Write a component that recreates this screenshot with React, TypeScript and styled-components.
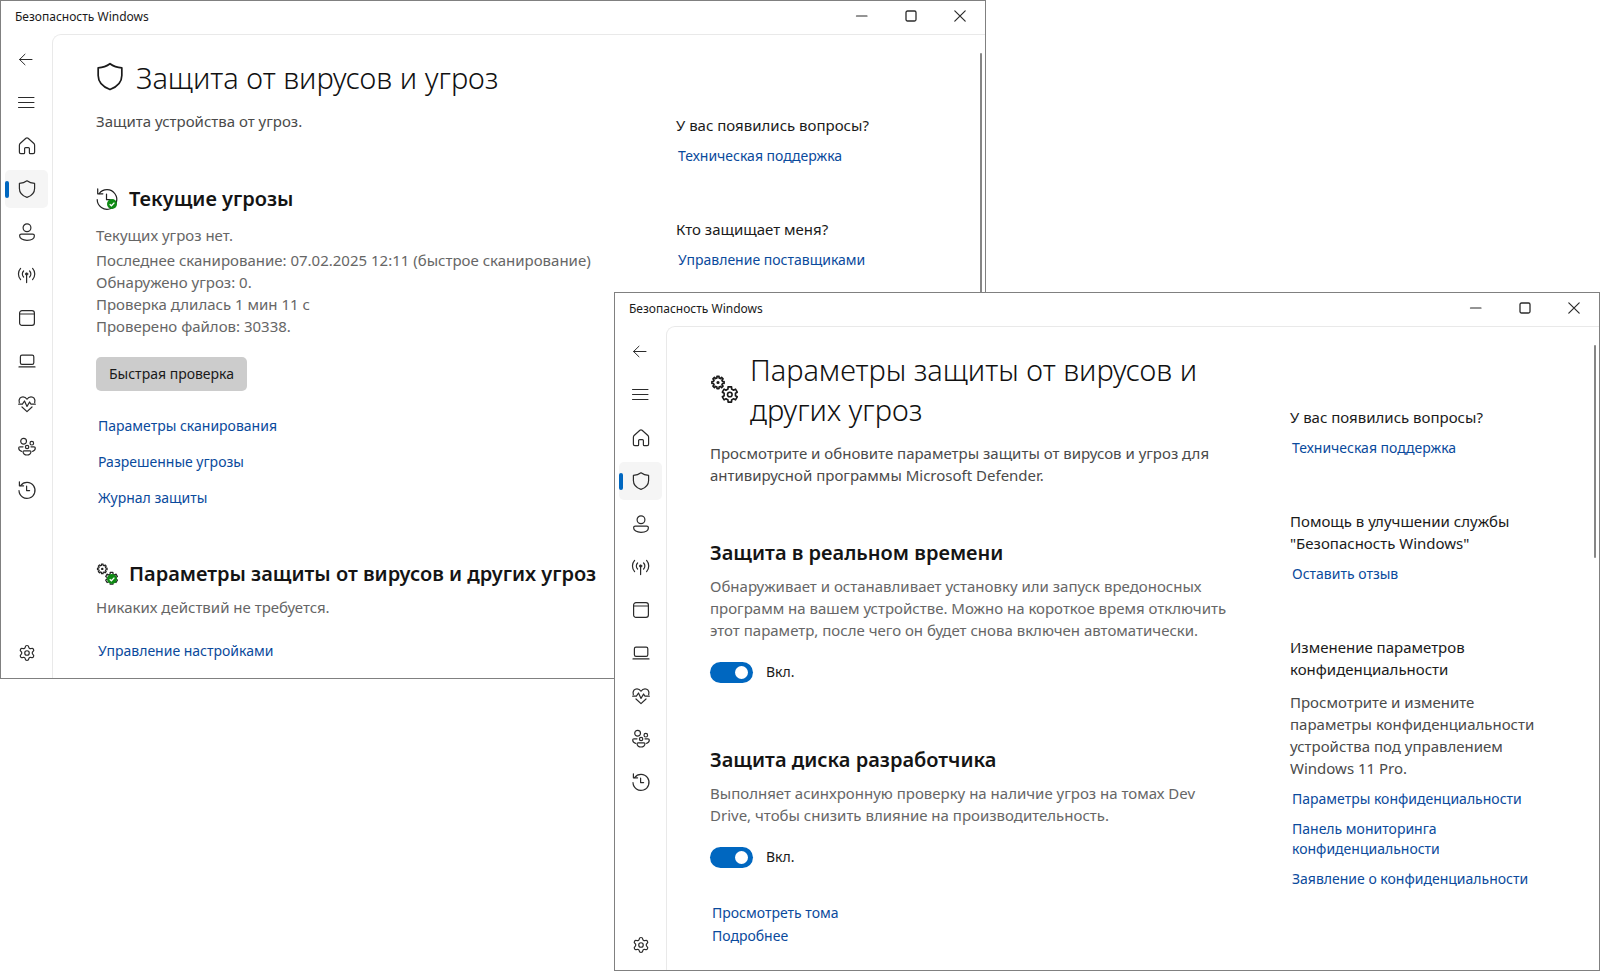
import React from "react";
import styled, { createGlobalStyle, css } from "styled-components";
import { Settings } from "lucide-react";

const GlobalStyle = createGlobalStyle`
  * { box-sizing: border-box; }
  body {
    margin: 0;
    background: #ffffff;
    color: #1a1a1a;
    font-family: "Noto Sans", "Open Sans", sans-serif;
    font-size: 15px;
    line-height: 22px;
  }
  h1, h2, h3, p, ul { margin: 0; padding: 0; }
  ul { list-style: none; }
`;

/* ---------- desktop and windows ---------- */

const Desktop = styled.div`
  display: grid;
  grid-template-columns: 614fr 372fr 614fr;
  grid-template-rows: 292px auto 292px;
  min-height: 100vh;
`;

const Frame = styled.section<{ $front?: boolean }>`
  position: relative;
  display: flex;
  flex-direction: column;
  min-width: 0;
  background: #ffffff;
  border: 1px solid #808080;
  grid-column: ${(p) => (p.$front ? "2 / 4" : "1 / 3")};
  grid-row: ${(p) => (p.$front ? "2 / 4" : "1 / 3")};
  z-index: ${(p) => (p.$front ? 2 : 1)};
`;

const TitleBar = styled.header`
  display: flex;
  justify-content: space-between;
  height: 33px;
  padding: 0 1px 0 14px;
  font-size: 12px;
  line-height: 32px;
`;

const Controls = styled.div`
  display: flex;
`;

const plainButton = css`
  display: flex;
  align-items: center;
  justify-content: center;
  padding: 0;
  border: 0;
  background: none;
  color: #2b2b2b;
  font: inherit;
`;

const ControlButton = styled.button`
  ${plainButton}
  width: 49px;
  height: 30px;
`;

const Body = styled.div`
  display: flex;
  flex: 1;
`;

const Nav = styled.nav`
  display: flex;
  flex-direction: column;
  gap: 5px;
  width: 51px;
  padding: 7px 4px 6px;
`;

const NavButton = styled.button<{ $active?: boolean; $last?: boolean }>`
  ${plainButton}
  position: relative;
  height: 38px;
  border-radius: 5px;
  background: ${(p) => (p.$active ? "#f5f5f5" : "none")};
  margin-top: ${(p) => (p.$last ? "auto" : "0")};

  &::before {
    content: "";
    display: ${(p) => (p.$active ? "block" : "none")};
    position: absolute;
    left: 0;
    top: 11px;
    width: 4px;
    height: 17px;
    border-radius: 2px;
    background: #0067c0;
  }
`;

const Panel = styled.div`
  display: flex;
  flex: 1;
  min-width: 0;
  gap: 40px;
  padding: 23px 40px 10px 43px;
  border: solid #e9e9e9;
  border-width: 1px 0 0 1px;
  border-top-left-radius: 9px;
`;

const Main = styled.main`
  flex: 1;
  min-width: 0;
`;

const Side = styled.aside`
  flex: none;
  width: 269px;
  padding-top: 56px;
`;

const ScrollThumb = styled.div<{ $long?: boolean }>`
  position: absolute;
  top: 52px;
  right: 3px;
  width: 2px;
  height: ${(p) => (p.$long ? "260px" : "213px")};
  border-radius: 1px;
  background: #868686;
`;

/* ---------- text ---------- */

const PageTitle = styled.div`
  display: flex;
  align-items: center;
  gap: 12px;
  margin-bottom: 12px;
`;

const PageIcon = styled.span`
  display: flex;
  width: 28px;
  padding-bottom: 3px;
`;

const H1 = styled.h1`
  font-size: 29px;
  line-height: 40px;
  font-weight: 300;
  color: #111111;
`;

const Lead = styled.p`
  color: #4a4a4a;
`;

const Section = styled.section`
  margin-top: 51px;

  & + & {
    margin-top: 50px;
  }
`;

const ToggleSection = styled.section`
  margin-top: 51px;

  & + & {
    margin-top: 61px;
  }
`;

const SectionTitle = styled.div`
  display: flex;
  align-items: center;
  gap: 11px;
  margin-bottom: 6px;
`;

const H2 = styled.h2`
  font-size: 20px;
  line-height: 32px;
  font-weight: 600;
  color: #141414;
  white-space: nowrap;
`;

const Text = styled.p`
  color: #666666;
`;

const ScanReport = styled.div`
  display: flex;
  flex-direction: column;
  gap: 3px;
  padding-top: 3px;
`;

const Link = styled.a`
  display: inline-block;
  padding-left: 2px;
  color: #0a4a9c;
  font-size: 14px;
  line-height: 20px;
  text-decoration: none;
`;

const LinkList = styled.ul<{ $top: number; $gap: number }>`
  display: flex;
  flex-direction: column;
  gap: ${(p) => p.$gap}px;
  margin-top: ${(p) => p.$top}px;

  li {
    display: flex;
  }
`;

const ScanButton = styled.button`
  display: block;
  height: 34px;
  margin-top: 20px;
  padding: 0 13px;
  border: 0;
  border-radius: 5px;
  background: #cccccc;
  color: #1a1a1a;
  font: inherit;
  font-size: 14px;
`;

const ToggleRow = styled.label`
  display: flex;
  align-items: center;
  gap: 13px;
  width: max-content;
  margin-top: 20px;
  font-size: 14px;
`;

const Switch = styled.input`
  appearance: none;
  display: flex;
  align-items: center;
  width: 43px;
  height: 21px;
  margin: 0;
  padding: 0 5px;
  border-radius: 11px;
  background: #8a8a8a;

  &::before {
    content: "";
    width: 13px;
    height: 13px;
    border-radius: 50%;
    background: #ffffff;
  }

  &:checked {
    justify-content: flex-end;
    background: #0067c0;
  }
`;

const SideBlock = styled.section`
  & + & {
    margin-top: 52px;
  }
`;

const H3 = styled.h3`
  font-size: 15px;
  line-height: 22px;
  font-weight: 400;
`;

const SideText = styled(Lead)`
  margin-top: 11px;
`;

/* ---------- icons ---------- */

const Stroke = styled.svg.attrs({ fill: "none", stroke: "currentColor", strokeLinecap: "round", strokeLinejoin: "round" })`
  display: block;
  flex: none;
  overflow: visible;
`;

const shieldPath =
  "M9 .8C11.2 2.5 13.7 3.3 16.6 3.4V8.4C16.6 12.7 13.6 15.7 9 17.4C4.4 15.7 1.4 12.7 1.4 8.4V3.4C4.3 3.3 6.8 2.5 9 .8Z";

function NavIcon({ children }: { children: React.ReactNode }) {
  return (
    <Stroke width="18" height="18" viewBox="0 0 18 18" strokeWidth="1.2" aria-hidden="true">
      {children}
    </Stroke>
  );
}

const clockShape = (
  <>
    <path d="M2.6 4.6A8 8 0 1 1 1 9.6" />
    <path d="M1.4 .8V4.8H5.6" />
    <path d="M8.6 5V9.6H11.6" />
  </>
);

const navItems: { label: string; active?: boolean; icon: React.ReactNode }[] = [
  { label: "Назад", icon: <path d="M14 8.5H1.6M7 3.2L1.6 8.5L7 13.8" strokeWidth="1" /> },
  { label: "Меню", icon: <path d="M.5 3.5H16M.5 8.5H16M.5 13.5H16" strokeWidth="1" /> },
  {
    label: "Домой",
    icon: (
      <path d="M1.4 8.2Q1.4 7.2 2.1 6.5L7.9 1.3Q9 .4 10.1 1.3L15.9 6.5Q16.6 7.2 16.6 8.2V15.2Q16.6 16.6 15.2 16.6H12.3Q11.4 16.6 11.4 15.7V11.6Q11.4 10.6 10.4 10.6H7.6Q6.6 10.6 6.6 11.6V15.7Q6.6 16.6 5.7 16.6H2.8Q1.4 16.6 1.4 15.2Z" />
    ),
  },
  { label: "Защита от вирусов и угроз", active: true, icon: <path d={shieldPath} /> },
  {
    label: "Защита учетных записей",
    icon: (
      <>
        <circle cx="9" cy="4.8" r="3.9" />
        <path d="M3.3 11.2H14.7Q16.4 11.2 16.4 12.8C16.4 15.6 13.2 17.3 9 17.3S1.6 15.6 1.6 12.8Q1.6 11.2 3.3 11.2Z" />
      </>
    ),
  },
  {
    label: "Брандмауэр и безопасность сети",
    icon: (
      <>
        <circle cx="8.6" cy="8" r="1.3" fill="currentColor" strokeWidth=".6" />
        <path d="M8.6 9V16.6M5.6 11A4.2 4.2 0 0 1 5.6 5M11.6 5A4.2 4.2 0 0 1 11.6 11" />
        <path d="M2.6 13.6A8.4 8.4 0 0 1 2.6 2.4M14.6 2.4A8.4 8.4 0 0 1 14.6 13.6" />
      </>
    ),
  },
  {
    label: "Управление приложениями и браузером",
    icon: (
      <>
        <rect x="1.6" y="1.6" width="14.8" height="14.8" rx="2.4" />
        <path d="M1.8 5H16.2" />
      </>
    ),
  },
  {
    label: "Безопасность устройства",
    icon: (
      <>
        <rect x="2.4" y="3.2" width="13.4" height="9.2" rx="1.6" />
        <path d="M1 14.9H17" />
      </>
    ),
  },
  {
    label: "Производительность и работоспособность",
    icon: (
      <>
        <path d="M1.3 7.6C.3 3.6 2.8 1.8 5 1.8C6.8 1.8 8 2.6 9 4.2C10 2.6 11.2 1.8 13 1.8C15.2 1.8 17.7 3.6 16.7 7.6" />
        <path d="M.7 9.2H4.4L6.5 6L9 11.4L11.6 7L13 9.2H17.3" />
        <path d="M4 12L9 16.6L14 12" />
      </>
    ),
  },
  {
    label: "Параметры для семьи",
    icon: (
      <>
        <circle cx="5.6" cy="3.3" r="2.9" />
        <circle cx="13.8" cy="5.2" r="1.8" />
        <circle cx="9.1" cy="9" r="1.7" />
        <path d="M5 8.8H2Q.7 8.8 .7 10Q.8 12.6 3.6 13.4M13 8.8H16Q17.3 8.8 17.3 10Q17.2 12.6 14.6 13.4" />
        <path d="M6 12.8H12Q13 12.8 13 13.8Q12.4 17 9 17T5 13.8Q5 12.8 6 12.8Z" />
      </>
    ),
  },
  { label: "Журнал защиты", icon: clockShape },
];

function gearPath(cx: number, cy: number, r: number, teeth: number) {
  const points: string[] = [];
  const step = (Math.PI * 2) / teeth;
  for (let i = 0; i < teeth; i++) {
    const a = i * step - Math.PI / 2;
    const spots: [number, number][] = [
      [-0.22, 1],
      [0.22, 1],
      [0.3, 0.74],
      [0.7, 0.74],
    ];
    spots.forEach(([offset, k]) => {
      const t = a + offset * step;
      points.push(`${(cx + Math.cos(t) * r * k).toFixed(2)} ${(cy + Math.sin(t) * r * k).toFixed(2)}`);
    });
  }
  return `M${points.join("L")}Z`;
}

function GearsIcon({ size, weight }: { size: number; weight: number }) {
  return (
    <Stroke width={size} height={size} viewBox="0 0 28 28" strokeWidth={weight} aria-hidden="true">
      <path d={gearPath(8, 7.5, 6.2, 8)} />
      <circle cx="8" cy="7.5" r=".8" fill="currentColor" />
      <path d={gearPath(19.8, 19.5, 7.8, 6)} />
      <circle cx="19.8" cy="19.5" r="2.3" />
    </Stroke>
  );
}

const BadgedIcon = styled.span`
  position: relative;
  display: flex;
  width: 22px;
  height: 22px;
  color: #222222;
`;

const Badge = styled.svg`
  position: absolute;
  right: 1px;
  bottom: 1px;
`;

function OkBadge() {
  return (
    <Badge width="10" height="10" viewBox="0 0 10 10" aria-hidden="true">
      <circle cx="5" cy="5" r="5" fill="#0f8a14" />
      <path d="M2.7 5.2L4.4 6.8L7.4 3.6" fill="none" stroke="#ffffff" strokeWidth="1.3" />
    </Badge>
  );
}

/* ---------- shared window shell ---------- */

interface WindowProps {
  front?: boolean;
  side: React.ReactNode;
  children: React.ReactNode;
}

function SecurityWindow({ front, side, children }: WindowProps) {
  return (
    <Frame $front={front}>
      <TitleBar>
        <span>Безопасность Windows</span>
        <Controls>
          <ControlButton aria-label="Свернуть">
            <Stroke width="12" height="12" viewBox="0 0 12 12" strokeWidth="1.2">
              <path d="M.5 6H11" />
            </Stroke>
          </ControlButton>
          <ControlButton aria-label="Развернуть">
            <Stroke width="12" height="12" viewBox="0 0 12 12" strokeWidth="1.3">
              <rect x="1" y="1" width="10" height="10" rx="1.5" />
            </Stroke>
          </ControlButton>
          <ControlButton aria-label="Закрыть">
            <Stroke width="12" height="12" viewBox="0 0 12 12" strokeWidth="1.2">
              <path d="M.8 .8L11.2 11.2M11.2 .8L.8 11.2" />
            </Stroke>
          </ControlButton>
        </Controls>
      </TitleBar>
      <Body>
        <Nav>
          {navItems.map((item) => (
            <NavButton key={item.label} $active={item.active} aria-label={item.label}>
              <NavIcon>{item.icon}</NavIcon>
            </NavButton>
          ))}
          <NavButton $last aria-label="Параметры">
            <Settings size={18} strokeWidth={1.6} />
          </NavButton>
        </Nav>
        <Panel>
          <Main>{children}</Main>
          <Side>{side}</Side>
        </Panel>
      </Body>
      <ScrollThumb $long={!front} />
    </Frame>
  );
}

function Links({ items, top = 10, gap = 10 }: { items: React.ReactNode[]; top?: number; gap?: number }) {
  return (
    <LinkList $top={top} $gap={gap}>
      {items.map((item, i) => (
        <li key={i}>
          <Link href="#">{item}</Link>
        </li>
      ))}
    </LinkList>
  );
}

function Toggle() {
  const [on, setOn] = React.useState(true);
  return (
    <ToggleRow>
      <Switch type="checkbox" role="switch" checked={on} onChange={() => setOn(!on)} />
      {on ? "Вкл." : "Откл."}
    </ToggleRow>
  );
}

const questions = (
  <SideBlock>
    <H3>У вас появились вопросы?</H3>
    <Links items={["Техническая поддержка"]} />
  </SideBlock>
);

export default function App() {
  return (
    <>
      <GlobalStyle />
      <Desktop>
        <SecurityWindow
          side={
            <>
              {questions}
              <SideBlock>
                <H3>Кто защищает меня?</H3>
                <Links items={["Управление поставщиками"]} />
              </SideBlock>
            </>
          }
        >
          <PageTitle>
            <PageIcon>
              <Stroke width="28" height="29" viewBox="0 0 18 18" strokeWidth="1.1" aria-hidden="true">
                <path d={shieldPath} />
              </Stroke>
            </PageIcon>
            <H1>Защита от вирусов и угроз</H1>
          </PageTitle>
          <Lead>Защита устройства от угроз.</Lead>

          <Section>
            <SectionTitle>
              <BadgedIcon>
                <Stroke width="22" height="22" viewBox="0 0 18 18" strokeWidth="1">
                  {clockShape}
                </Stroke>
                <OkBadge />
              </BadgedIcon>
              <H2>Текущие угрозы</H2>
            </SectionTitle>
            <ScanReport>
              <Text>Текущих угроз нет.</Text>
              <Text>
                Последнее сканирование: 07.02.2025 12:11 (быстрое сканирование)
                <br />
                Обнаружено угроз: 0.
                <br />
                Проверка длилась 1 мин 11 с
                <br />
                Проверено файлов: 30338.
              </Text>
            </ScanReport>
            <ScanButton>Быстрая проверка</ScanButton>
            <Links top={25} gap={16} items={["Параметры сканирования", "Разрешенные угрозы", "Журнал защиты"]} />
          </Section>

          <Section>
            <SectionTitle>
              <BadgedIcon>
                <GearsIcon size={22} weight={1.5} />
                <OkBadge />
              </BadgedIcon>
              <H2>Параметры защиты от вирусов и других угроз</H2>
            </SectionTitle>
            <Text>Никаких действий не требуется.</Text>
            <Links top={23} items={["Управление настройками"]} />
          </Section>
        </SecurityWindow>

        <SecurityWindow
          front
          side={
            <>
              {questions}
              <SideBlock>
                <H3>
                  Помощь в улучшении службы
                  <br />
                  "Безопасность Windows"
                </H3>
                <Links items={["Оставить отзыв"]} />
              </SideBlock>
              <SideBlock>
                <H3>
                  Изменение параметров
                  <br />
                  конфиденциальности
                </H3>
                <SideText>
                  Просмотрите и измените
                  <br />
                  параметры конфиденциальности
                  <br />
                  устройства под управлением
                  <br />
                  Windows 11 Pro.
                </SideText>
                <Links
                  items={[
                    "Параметры конфиденциальности",
                    <>
                      Панель мониторинга
                      <br />
                      конфиденциальности
                    </>,
                    "Заявление о конфиденциальности",
                  ]}
                />
              </SideBlock>
            </>
          }
        >
          <PageTitle>
            <PageIcon>
              <GearsIcon size={28} weight={1.6} />
            </PageIcon>
            <H1>
              Параметры защиты от вирусов и<br />
              других угроз
            </H1>
          </PageTitle>
          <Lead>
            Просмотрите и обновите параметры защиты от вирусов и угроз для
            <br />
            антивирусной программы Microsoft Defender.
          </Lead>

          <ToggleSection>
            <SectionTitle>
              <H2>Защита в реальном времени</H2>
            </SectionTitle>
            <Text>
              Обнаруживает и останавливает установку или запуск вредоносных
              <br />
              программ на вашем устройстве. Можно на короткое время отключить
              <br />
              этот параметр, после чего он будет снова включен автоматически.
            </Text>
            <Toggle />
          </ToggleSection>

          <ToggleSection>
            <SectionTitle>
              <H2>Защита диска разработчика</H2>
            </SectionTitle>
            <Text>
              Выполняет асинхронную проверку на наличие угроз на томах Dev
              <br />
              Drive, чтобы снизить влияние на производительность.
            </Text>
            <Toggle />
            <Links top={35} gap={3} items={["Просмотреть тома", "Подробнее"]} />
          </ToggleSection>
        </SecurityWindow>
      </Desktop>
    </>
  );
}
